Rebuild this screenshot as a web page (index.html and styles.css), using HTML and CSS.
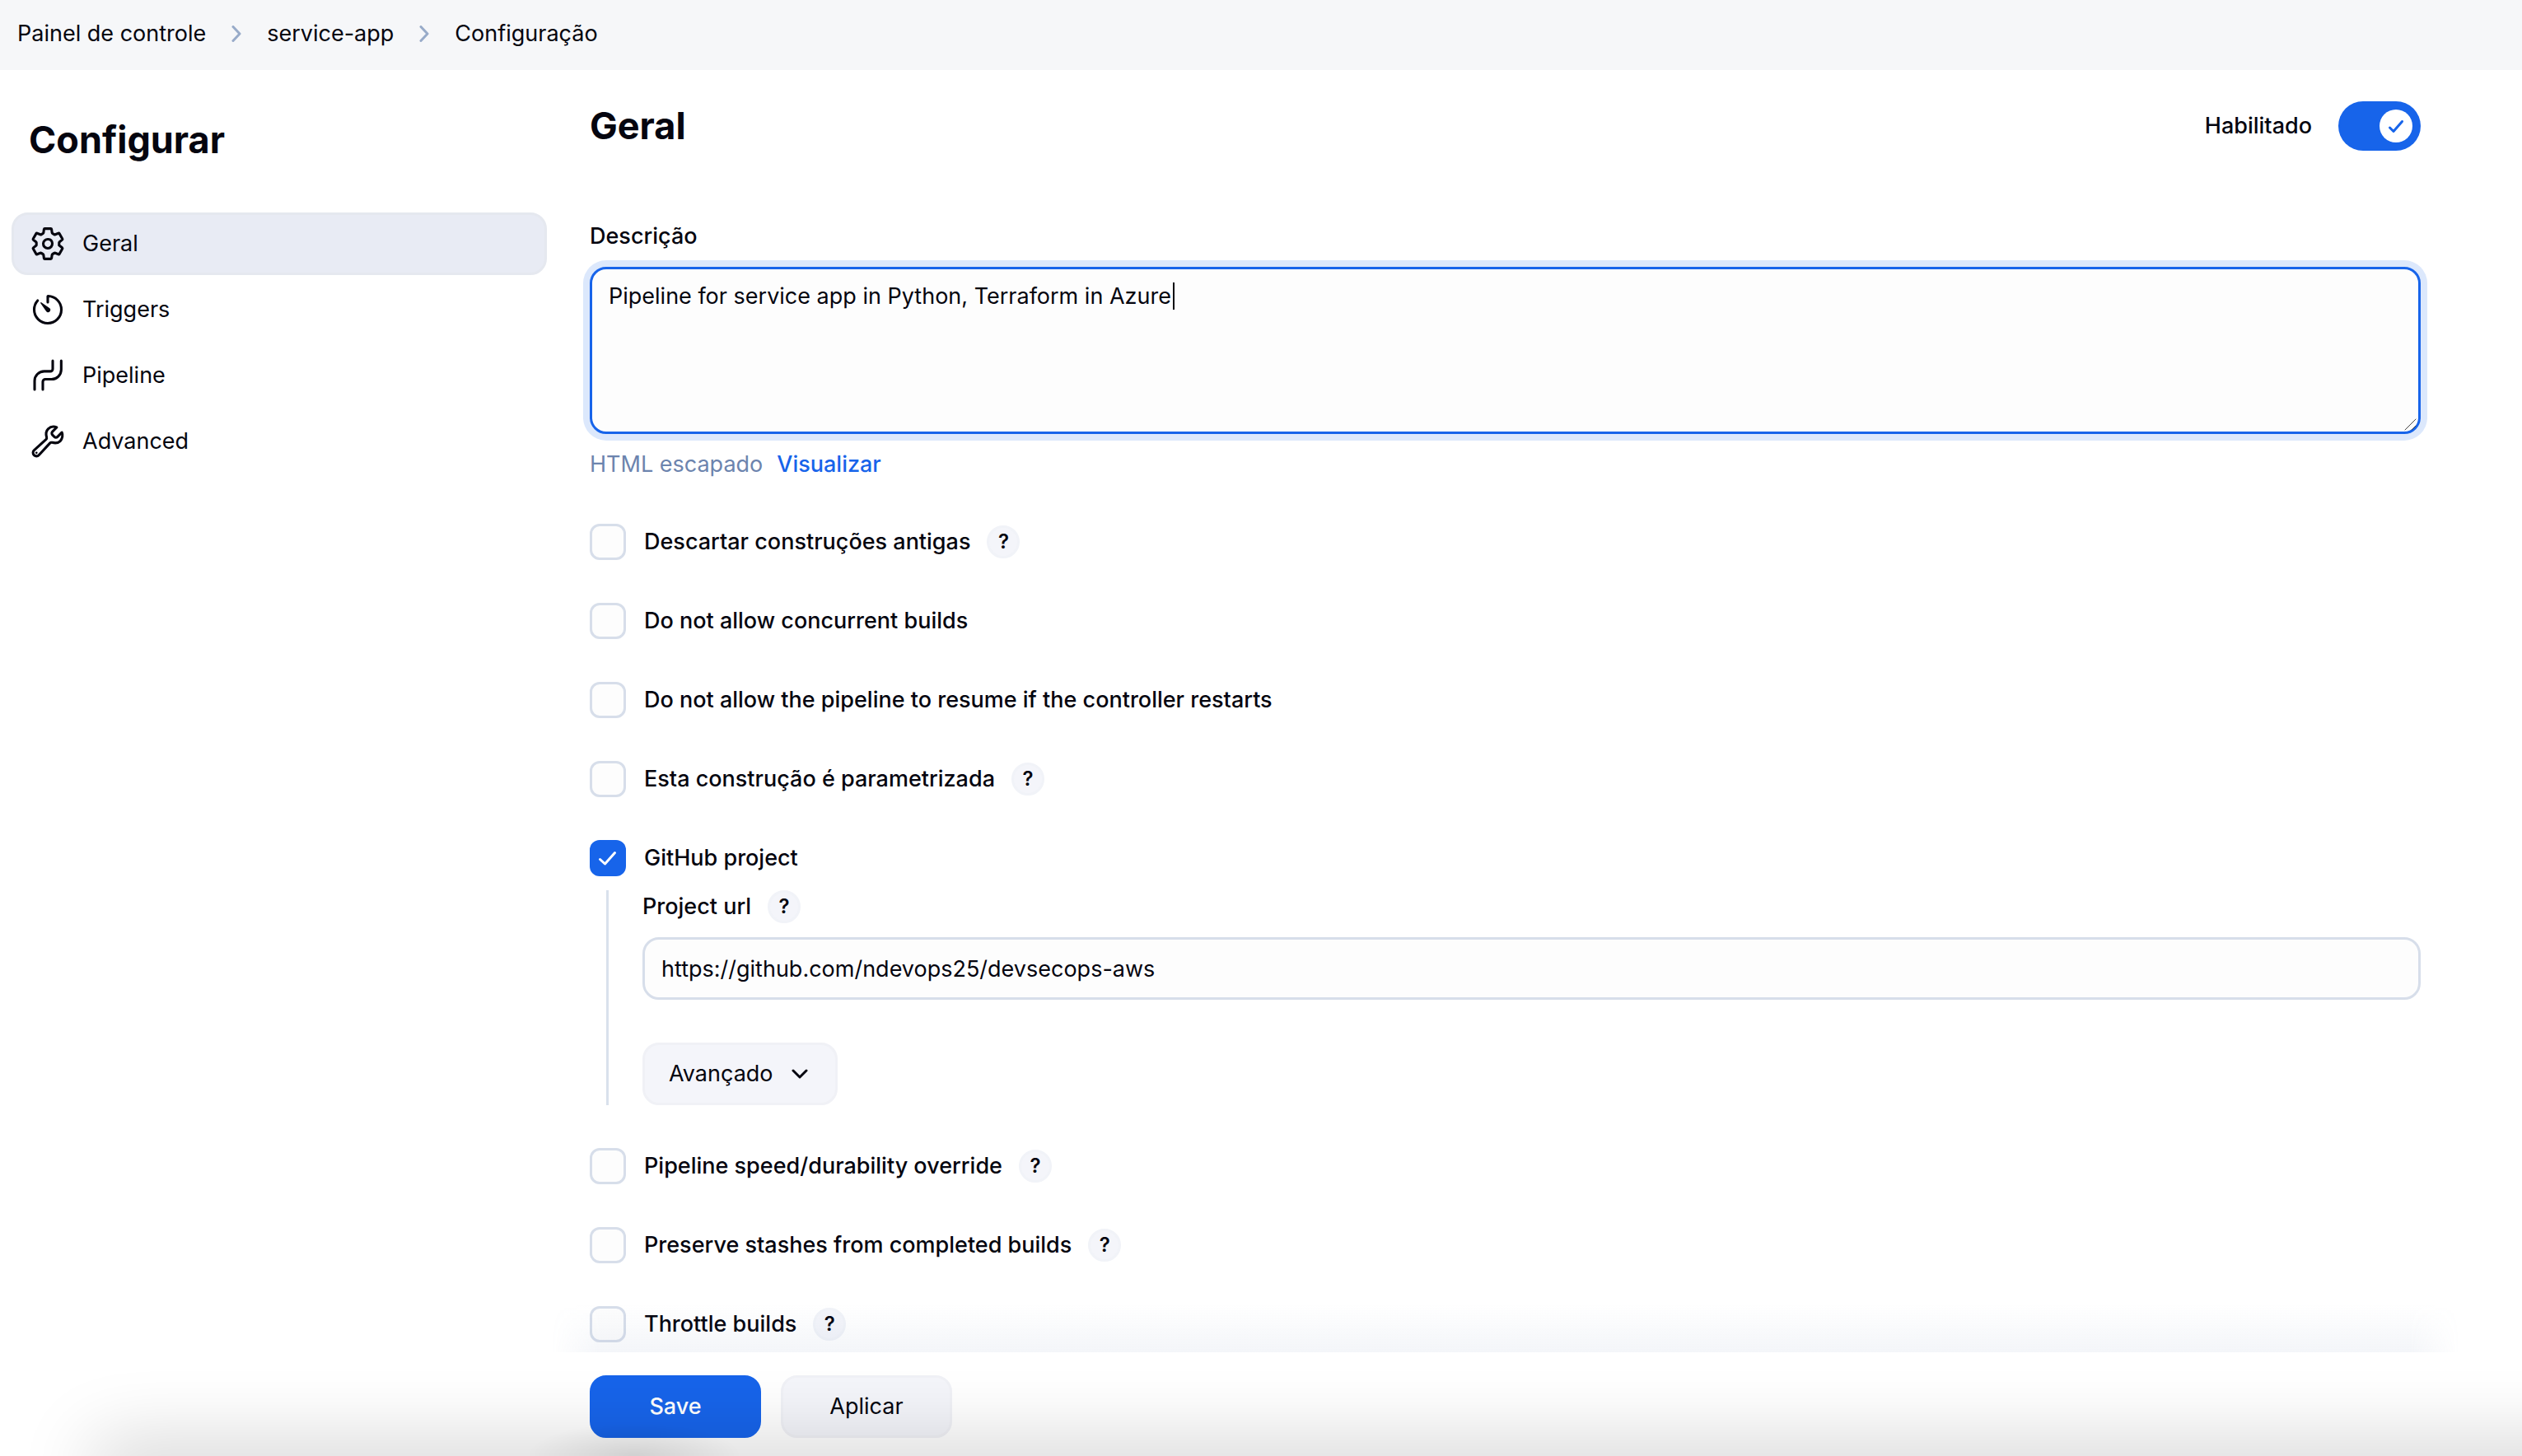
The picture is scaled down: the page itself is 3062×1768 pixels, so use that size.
FILE: index.html
```html
<!DOCTYPE html>
<html lang="pt-BR">
<head>
<meta charset="utf-8">
<title>service-app Configuração</title>
<link rel="stylesheet" href="styles.css">
</head>
<body>
<nav class="breadcrumbs" aria-label="Breadcrumb">
  <a href="#">Painel de controle</a>
  <svg class="crumb-sep" viewBox="0 0 12 20" aria-hidden="true"><path d="M2 1.5L10 10L2 18.5"/></svg>
  <a href="#">service-app</a>
  <svg class="crumb-sep" viewBox="0 0 12 20" aria-hidden="true"><path d="M2 1.5L10 10L2 18.5"/></svg>
  <a href="#">Configuração</a>
</nav>

<div class="layout">
  <aside class="sidebar">
    <h1>Configurar</h1>
    <nav class="tasks" aria-label="Configurar">
      <a class="task task-active" href="#geral">
        <svg viewBox="0 0 512 512" aria-hidden="true"><path d="M262.29 192.31a64 64 0 1057.4 57.4 64.13 64.13 0 00-57.4-57.4zM416.39 256a154.34 154.34 0 01-1.53 20.79l45.21 35.46a10.81 10.81 0 012.45 13.75l-42.77 74a10.81 10.81 0 01-13.14 4.59l-44.9-18.08a16.11 16.11 0 00-15.17 1.75A164.48 164.48 0 01325 400.8a15.94 15.94 0 00-8.82 12.14l-6.73 47.89a11.08 11.08 0 01-10.68 9.17h-85.54a11.11 11.11 0 01-10.69-8.87l-6.72-47.82a16.07 16.07 0 00-9-12.22 155.3 155.3 0 01-21.46-12.57 16 16 0 00-15.11-1.71l-44.89 18.07a10.81 10.81 0 01-13.14-4.58l-42.77-74a10.8 10.8 0 012.45-13.75l38.21-30a16.05 16.05 0 006-14.08c-.36-4.17-.58-8.33-.58-12.5s.21-8.27.58-12.35a16 16 0 00-6.07-13.94l-38.19-30A10.81 10.81 0 0149.48 186l42.77-74a10.81 10.81 0 0113.14-4.59l44.9 18.08a16.11 16.11 0 0015.17-1.75A164.48 164.48 0 01187 111.2a15.94 15.94 0 008.82-12.14l6.73-47.89A11.08 11.08 0 01213.23 42h85.54a11.11 11.11 0 0110.69 8.87l6.72 47.82a16.07 16.07 0 009 12.22 155.3 155.3 0 0121.46 12.57 16 16 0 0015.11 1.71l44.89-18.07a10.81 10.81 0 0113.14 4.58l42.77 74a10.8 10.8 0 01-2.45 13.75l-38.21 30a16.05 16.05 0 00-6.05 14.08c.33 4.14.55 8.3.55 12.47z"/></svg>
        <span>Geral</span>
      </a>
      <a class="task" href="#triggers">
        <svg viewBox="0 0 512 512" aria-hidden="true"><path d="M112.91 128A191.85 191.85 0 0064 254c-1.18 106.35 85.65 193.8 192 194 106.2.2 192-85.83 192-192 0-104.54-83.55-189.61-187.5-192a4.36 4.36 0 00-4.5 4.37V152"/><path class="solid" d="M233.38 278.63l-79-113a8.13 8.13 0 0111.32-11.32l113 79a32.5 32.5 0 01-37.25 53.26 33.21 33.21 0 01-8.07-7.94z"/></svg>
        <span>Triggers</span>
      </a>
      <a class="task" href="#pipeline">
        <svg viewBox="0 0 512 512" aria-hidden="true"><path d="M326 48v116a32 32 0 01-32 32h-88A136 136 0 0070 332v122M446 48v124a136 136 0 01-136 136h-88a36 36 0 00-36 36v110"/></svg>
        <span>Pipeline</span>
      </a>
      <a class="task" href="#advanced">
        <svg viewBox="0 0 512 512" aria-hidden="true"><path d="M393.87 190a32.1 32.1 0 01-45.25 0l-26.57-26.57a32.09 32.09 0 010-45.26L382.19 58a1 1 0 00-.3-1.64c-38.82-16.64-89.15-8.16-121.11 23.57-30.58 30.35-32.32 76-21.12 115.84a31.93 31.93 0 01-9.06 32.08L64 380a48.17 48.17 0 1068 68l153.86-167a31.93 31.93 0 0131.6-9.13c39.54 10.59 84.54 8.6 114.72-21.19 32.49-32 39.5-88.56 23.75-120.93a1 1 0 00-1.6-.26z"/><circle class="solid" cx="96" cy="416" r="16"/></svg>
        <span>Advanced</span>
      </a>
    </nav>
  </aside>

  <main>
    <form class="config" id="config">
      <header class="section-head">
        <h2 id="geral">Geral</h2>
        <label class="switch">Habilitado <input type="checkbox" role="switch" checked></label>
      </header>

      <div class="description">
        <label class="field-label" for="description">Descrição</label>
        <div class="textarea-wrap">
          <textarea id="description" spellcheck="false">Pipeline for service app in Python, Terraform in Azure</textarea>
          <span class="caret" aria-hidden="true"></span>
          <svg class="grip" viewBox="0 0 18 18" aria-hidden="true"><path d="M2 16L15 3M10 16L15 11"/></svg>
        </div>
        <p class="format"><span>HTML escapado</span><a href="#">Visualizar</a></p>
      </div>

      <div class="options">
        <div class="option"><label><input type="checkbox">Descartar construções antigas</label><button class="help" type="button">?</button></div>
        <div class="option"><label><input type="checkbox">Do not allow concurrent builds</label></div>
        <div class="option"><label><input type="checkbox">Do not allow the pipeline to resume if the controller restarts</label></div>
        <div class="option"><label><input type="checkbox">Esta construção é parametrizada</label><button class="help" type="button">?</button></div>
        <div class="option-group">
          <div class="option"><label><input type="checkbox" checked>GitHub project</label></div>
          <div class="nested">
            <div class="nested-label"><label for="project-url">Project url</label><button class="help" type="button">?</button></div>
            <input class="text-input" id="project-url" type="text" value="https://github.com/ndevops25/devsecops-aws">
            <button class="button button-more" type="button">Avançado
              <svg viewBox="0 0 20 12" aria-hidden="true"><path d="M2 2L10 10L18 2"/></svg>
            </button>
          </div>
        </div>
        <div class="option"><label><input type="checkbox">Pipeline speed/durability override</label><button class="help" type="button">?</button></div>
        <div class="option"><label><input type="checkbox">Preserve stashes from completed builds</label><button class="help" type="button">?</button></div>
        <div class="option"><label><input type="checkbox">Throttle builds</label><button class="help" type="button">?</button></div>
      </div>

      <footer class="bottom-bar">
        <button class="button button-primary" type="submit">Save</button>
        <button class="button button-wide" type="button">Aplicar</button>
      </footer>
    </form>
  </main>
</div>
<div class="page-shade" aria-hidden="true"></div>
</body>
</html>
```
FILE: styles.css
```css
:root {
  --text: #05050f;
  --accent: #1764ea;
  --border: #d7deea;
  --field: #fdfdfd;
  --button: #f4f5fa;
}

* {
  box-sizing: border-box;
}

body {
  margin: 0;
  background: #fff;
  color: var(--text);
  font: 400 27px/40px Inter, "Liberation Sans", sans-serif;
}

a {
  color: inherit;
  text-decoration: none;
}

h1,
h2,
p {
  margin: 0;
}

h1,
h2 {
  font-size: 45px;
  line-height: 60px;
  font-weight: 650;
}

input,
textarea,
button {
  margin: 0;
  color: inherit;
  font: inherit;
}

svg {
  display: block;
  flex: none;
  fill: none;
  stroke: currentColor;
  stroke-linecap: round;
  stroke-linejoin: round;
}

.breadcrumbs {
  display: flex;
  align-items: center;
  gap: 31px;
  height: 85px;
  padding: 0 21px 4px;
  background: #f6f7f9;
}

.crumb-sep {
  width: 12px;
  height: 20px;
  stroke: #98abc9;
  stroke-width: 3;
}

.layout {
  display: grid;
  grid-template-columns: 664px minmax(0, 1fr);
  gap: 52px;
}

.sidebar {
  padding: 55px 0 0 14px;
}

.sidebar h1 {
  padding-left: 21px;
}

.tasks {
  display: flex;
  flex-direction: column;
  gap: 4px;
  margin-top: 58px;
}

.task {
  display: flex;
  align-items: center;
  gap: 20px;
  height: 76px;
  padding-left: 19px;
  border: 3px solid transparent;
  border-radius: 20px;
}

.task svg {
  width: 44px;
  height: 44px;
  stroke-width: 36;
}

.task-active {
  border-color: #e5e8ef;
  background: #e8ebf4;
}

.solid {
  fill: currentColor;
  stroke: none;
}

.config {
  padding-top: 38px;
}

.section-head,
.description,
.options {
  margin-right: 123px;
}

.section-head {
  display: flex;
  justify-content: space-between;
  align-items: center;
  height: 60px;
}

.switch {
  display: flex;
  align-items: center;
  gap: 32px;
  font-weight: 500;
}

.switch input {
  appearance: none;
  width: 100px;
  height: 60px;
  border-radius: 30px;
  background: var(--accent);
}

.switch input::before {
  content: "";
  display: block;
  width: 40px;
  height: 40px;
  margin: 10px 10px 10px auto;
  border-radius: 50%;
  background: #fff url("data:image/svg+xml,%3Csvg xmlns='http://www.w3.org/2000/svg' viewBox='0 0 40 40' fill='none' stroke='%231764ea' stroke-width='3' stroke-linecap='round' stroke-linejoin='round'%3E%3Cpath d='M12.5 22L17 26.500L27.500 14.500'/%3E%3C/svg%3E");
}

.description {
  margin-top: 84px;
}

.field-label {
  display: block;
  font-weight: 500;
}

.textarea-wrap {
  position: relative;
  margin-top: 17px;
}

textarea {
  display: block;
  width: 100%;
  height: 203px;
  padding: 13px 20px;
  border: 3px solid var(--accent);
  border-radius: 20px;
  outline: 0;
  background: var(--field);
  box-shadow: 0 0 0 8px #dce8fc;
  resize: none;
}

.caret {
  position: absolute;
  top: 19px;
  left: 708px;
  width: 2px;
  height: 33px;
  background: var(--text);
}

.grip {
  position: absolute;
  right: 3px;
  bottom: 3px;
  width: 18px;
  height: 18px;
  stroke: #444;
}

.format {
  display: flex;
  gap: 17px;
  margin-top: 17px;
  color: #6c84ae;
}

.format a {
  color: var(--accent);
  font-weight: 500;
}

.options {
  display: flex;
  flex-direction: column;
  gap: 52px;
  margin-top: 52px;
  font-weight: 500;
}

.option,
.option label {
  display: flex;
  align-items: center;
}

.option {
  gap: 20px;
}

.option label {
  gap: 22px;
}

.option input {
  appearance: none;
  width: 44px;
  height: 44px;
  border: 3px solid var(--border);
  border-radius: 12px;
  background: var(--field);
}

.option input:checked {
  border: 0;
  background: var(--accent) url("data:image/svg+xml,%3Csvg xmlns='http://www.w3.org/2000/svg' viewBox='0 0 44 44' fill='none' stroke='%23fff' stroke-width='3' stroke-linecap='round' stroke-linejoin='round'%3E%3Cpath d='M12.500 23.500L18.500 29L30.500 15.500'/%3E%3C/svg%3E");
}

.help {
  width: 40px;
  height: 40px;
  padding: 0;
  border: 3px solid #f1f3f8;
  border-radius: 50%;
  background: var(--button);
  font-size: 24px;
  line-height: 34px;
  font-weight: 600;
}

.nested {
  display: flex;
  flex-direction: column;
  align-items: flex-start;
  margin: 17px 0 0 20px;
  padding-left: 41px;
  border-left: 3px solid #d9e1ec;
}

.nested-label {
  display: flex;
  align-items: center;
  gap: 20px;
}

.text-input {
  width: 100%;
  height: 76px;
  margin: 17px 0 52px;
  padding: 0 20px;
  border: 3px solid var(--border);
  border-radius: 20px;
  outline: 0;
  background: var(--field);
  font-weight: 400;
}

.button {
  height: 76px;
  border: 3px solid #f0f1f6;
  border-radius: 20px;
  background: var(--button);
  font-weight: 500;
}

.button-more {
  display: flex;
  align-items: center;
  gap: 22px;
  padding: 0 33px 0 29px;
  font-weight: 400;
}

.button-more svg {
  width: 20px;
  height: 12px;
  stroke-width: 3;
}

.button-wide,
.button-primary {
  width: 208px;
}

.button-wide {
  font-weight: 400;
}

.button-primary {
  border-color: var(--accent);
  background: var(--accent);
  color: #fff;
}

.bottom-bar {
  position: sticky;
  bottom: 0;
  display: flex;
  gap: 24px;
  margin-top: 12px;
  padding: 28px 0 20px;
  background: #fff;
}

/* soft fade above the sticky bar */
.bottom-bar::before {
  content: "";
  position: absolute;
  right: 76px;
  bottom: 100%;
  left: -46px;
  height: 58px;
  background: linear-gradient(to top, #6b84b014, #6b84b000);
  mask-image: linear-gradient(to right, transparent, #000 60px, #000 calc(100% - 60px), transparent);
}

/* shadow rising from the window's lower edge */
.page-shade {
  position: fixed;
  right: -200px;
  bottom: -40px;
  left: 130px;
  height: 40px;
  box-shadow: 0 0 90px 16px #0000002e;
  pointer-events: none;
}

.page-shade::before {
  content: "";
  position: absolute;
  bottom: 0;
  left: 510px;
  width: 260px;
  height: 80px;
  background: radial-gradient(closest-side, #00000018, #0000);
}
```
